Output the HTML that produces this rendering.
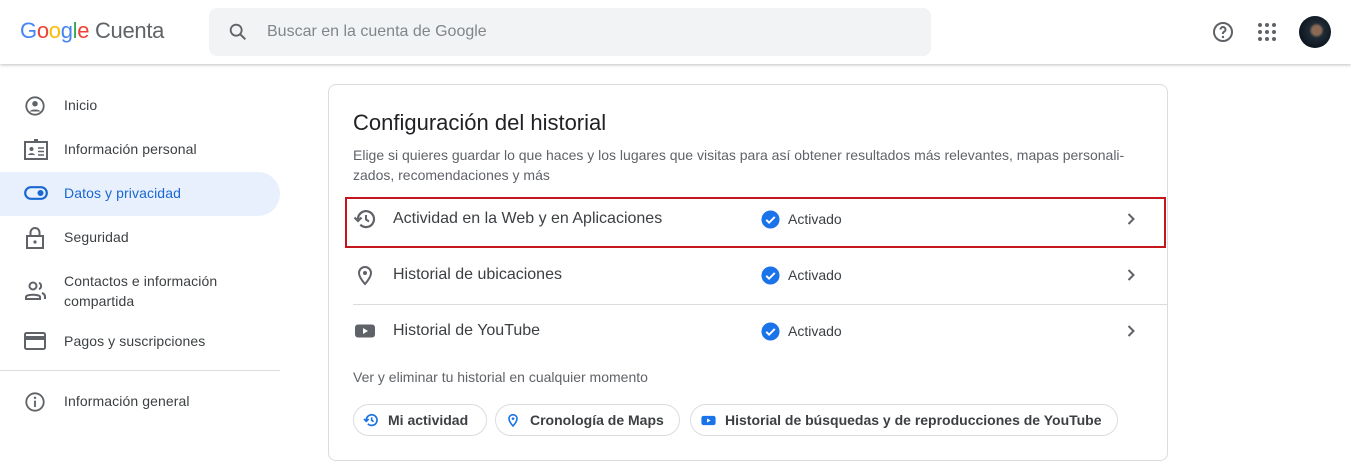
<!DOCTYPE html>
<html><head><meta charset="utf-8"><style>
*{margin:0;padding:0;box-sizing:border-box}
body{width:1351px;height:474px;overflow:hidden;background:#fff;font-family:"Liberation Sans",Arial,sans-serif;color:#202124;position:relative}
.hdr{position:absolute;left:0;top:0;width:1351px;height:64px;background:#fff;box-shadow:0 1px 3px rgba(0,0,0,.25);z-index:2}
.abs{position:absolute}
.nav{position:absolute;left:64px;font-size:14px;color:#3c4043;letter-spacing:.1px}
.ic{position:absolute;left:24px}
.card{position:absolute;left:328px;top:84px;width:840px;height:377px;border:1px solid #dadce0;border-radius:8px}
.row{position:absolute;left:393px;font-size:16px;color:#3c4043}
.act{position:absolute;left:788px;font-size:14px;color:#3c4043}
.chip{position:absolute;top:404px;height:32px;border:1px solid #dadce0;border-radius:16px;font-size:14px;color:#3c4043;font-weight:bold;line-height:30px}
</style></head><body>
<div class="hdr">
 <div class="abs" style="left:20px;top:18px;font-size:22px;letter-spacing:-.3px"><span style="color:#4285f4">G</span><span style="color:#ea4335">o</span><span style="color:#fbbc05">o</span><span style="color:#4285f4">g</span><span style="color:#34a853">l</span><span style="color:#ea4335">e</span> <span style="color:#5f6368">Cuenta</span></div>
 <div class="abs" style="left:209px;top:8px;width:722px;height:48px;background:#f1f3f4;border-radius:8px">
  <svg class="abs" style="left:18px;top:13px" width="22" height="22" viewBox="0 0 24 24"><circle cx="10" cy="10" r="6" fill="none" stroke="#5f6368" stroke-width="2"/><path d="M14.5 14.5L20 20" stroke="#5f6368" stroke-width="2.2"/></svg>
  <div class="abs" style="left:58px;top:15px;font-size:16px;color:#80868b">Buscar en la cuenta de Google</div>
 </div>
 <svg class="abs" style="left:1211px;top:20px" width="24" height="24" viewBox="0 0 24 24"><circle cx="12" cy="12" r="9" fill="none" stroke="#5f6368" stroke-width="2"/><path d="M9.5 9.5a2.5 2.5 0 1 1 3.5 2.3c-.7.4-1 .9-1 1.7v.5" fill="none" stroke="#5f6368" stroke-width="2"/><circle cx="12" cy="17" r="1.2" fill="#5f6368"/></svg>
 <svg class="abs" style="left:1258px;top:23px" width="18" height="18" viewBox="0 0 18 18" fill="#5f6368"><circle cx="2" cy="2" r="2"/><circle cx="9" cy="2" r="2"/><circle cx="16" cy="2" r="2"/><circle cx="2" cy="9" r="2"/><circle cx="9" cy="9" r="2"/><circle cx="16" cy="9" r="2"/><circle cx="2" cy="16" r="2"/><circle cx="9" cy="16" r="2"/><circle cx="16" cy="16" r="2"/></svg>
 <div class="abs" style="left:1299px;top:16px;width:32px;height:32px;border-radius:50%;background:radial-gradient(circle at 55% 45%,#8a6a55 0 18%,#1e2a35 30%,#0d1620 70%)"></div>
</div>

<div class="abs" style="left:0;top:172px;width:280px;height:44px;background:#e8f0fe;border-radius:0 22px 22px 0"></div>
<svg class="ic" style="top:95px" width="22" height="22" viewBox="0 0 24 24"><circle cx="12" cy="12" r="9.5" fill="none" stroke="#5f6368" stroke-width="2"/><circle cx="12" cy="9.5" r="3" fill="#5f6368"/><path d="M6 18c2-3 10-3 12 0" fill="#5f6368"/></svg>
<div class="nav" style="top:97px">Inicio</div>
<svg class="ic" style="top:139px" width="24" height="22" viewBox="0 0 24 22"><rect x="1" y="3" width="22" height="17" fill="none" stroke="#5f6368" stroke-width="2"/><rect x="10" y="0" width="4" height="4" fill="#5f6368"/><circle cx="7.5" cy="10" r="2" fill="#5f6368"/><path d="M4 16c1-2.5 6-2.5 7 0z" fill="#5f6368"/><path d="M14 9h6M14 12.5h6M14 16h6" stroke="#5f6368" stroke-width="1.6"/></svg>
<div class="nav" style="top:141px">Información personal</div>
<svg class="ic" style="top:185px" width="24" height="16" viewBox="0 0 24 16"><rect x="1.2" y="2.2" width="21.6" height="11.6" rx="5.8" fill="none" stroke="#1967d2" stroke-width="2.2"/><circle cx="16.5" cy="8" r="3" fill="#1967d2"/></svg>
<div class="nav" style="top:185px;color:#1967d2">Datos y privacidad</div>
<svg class="ic" style="top:226px" width="22" height="24" viewBox="0 0 22 24"><rect x="3" y="10" width="16" height="12" fill="none" stroke="#5f6368" stroke-width="2"/><path d="M6.5 10V6.5a4.5 4.5 0 0 1 9 0V10" fill="none" stroke="#5f6368" stroke-width="2"/><circle cx="11" cy="16" r="1.6" fill="#5f6368"/></svg>
<div class="nav" style="top:229px">Seguridad</div>
<svg class="ic" style="top:280px" width="24" height="22" viewBox="0 0 24 22"><circle cx="9" cy="6" r="3.5" fill="none" stroke="#5f6368" stroke-width="2"/><path d="M2 19v-2c0-3 14-3 14 0v2z" fill="none" stroke="#5f6368" stroke-width="2"/><path d="M15 2.8a3.5 3.5 0 0 1 0 6.4M18 13c2 .7 3 2 3 4v2" fill="none" stroke="#5f6368" stroke-width="2"/></svg>
<div class="nav" style="top:271px;line-height:20px">Contactos e información<br>compartida</div>
<svg class="ic" style="top:332px" width="22" height="18" viewBox="0 0 22 18"><rect x="1" y="1" width="20" height="16" rx="1.5" fill="none" stroke="#5f6368" stroke-width="2"/><rect x="1" y="4" width="20" height="4" fill="#5f6368"/></svg>
<div class="nav" style="top:333px">Pagos y suscripciones</div>
<div class="abs" style="left:0;top:370px;width:280px;height:1px;background:#dadce0"></div>
<svg class="ic" style="top:391px" width="22" height="22" viewBox="0 0 24 24"><circle cx="12" cy="12" r="9.5" fill="none" stroke="#5f6368" stroke-width="2"/><rect x="11" y="10.5" width="2" height="7" fill="#5f6368"/><circle cx="12" cy="7.5" r="1.3" fill="#5f6368"/></svg>
<div class="nav" style="top:393px">Información general</div>

<div class="card"></div>
<div class="abs" style="left:353px;top:110px;font-size:22px;color:#202124">Configuración del historial</div>
<div class="abs" style="left:353px;top:145px;width:800px;font-size:14px;line-height:20px;color:#5f6368">Elige si quieres guardar lo que haces y los lugares que visitas para así obtener resultados más relevantes, mapas personali-<br>zados, recomendaciones y más</div>

<div class="abs" style="left:345px;top:197px;width:821px;height:51px;border:2.5px solid #c5161d"></div>
<svg class="abs" style="left:353px;top:207px" width="24" height="24" viewBox="0 0 24 24"><path d="M5 12a8 8 0 1 1 2.3 5.7" fill="none" stroke="#5f6368" stroke-width="2.2"/><path d="M1.5 10.5L5 14l3.5-3.5" fill="none" stroke="#5f6368" stroke-width="2.2"/><path d="M13 8v4.5l3 2" fill="none" stroke="#5f6368" stroke-width="2"/></svg>
<div class="row" style="top:210px">Actividad en la Web y en Aplicaciones</div>
<svg class="abs" style="left:353px;top:263px" width="24" height="24" viewBox="0 0 24 24"><path d="M12 21s-6-6.5-6-11a6 6 0 0 1 12 0c0 4.5-6 11-6 11z" fill="none" stroke="#5f6368" stroke-width="2"/><circle cx="12" cy="10" r="2" fill="#5f6368"/></svg>
<div class="row" style="top:266px">Historial de ubicaciones</div>
<div class="abs" style="left:353px;top:304px;width:814px;height:1px;background:#dadce0"></div>
<svg class="abs" style="left:353px;top:319px" width="24" height="24" viewBox="0 0 24 24"><rect x="2" y="5.5" width="20" height="13" rx="3" fill="#5f6368"/><path d="M10 9l5 3-5 3z" fill="#fff"/></svg>
<div class="row" style="top:322px">Historial de YouTube</div>

<svg class="abs" style="left:761px;top:210px" width="19" height="19" viewBox="0 0 20 20"><circle cx="10" cy="10" r="9.5" fill="#1a73e8"/><path d="M5.5 10.3l3 3 6-6" fill="none" stroke="#fff" stroke-width="2"/></svg>
<svg class="abs" style="left:761px;top:266px" width="19" height="19" viewBox="0 0 20 20"><circle cx="10" cy="10" r="9.5" fill="#1a73e8"/><path d="M5.5 10.3l3 3 6-6" fill="none" stroke="#fff" stroke-width="2"/></svg>
<svg class="abs" style="left:761px;top:322px" width="19" height="19" viewBox="0 0 20 20"><circle cx="10" cy="10" r="9.5" fill="#1a73e8"/><path d="M5.5 10.3l3 3 6-6" fill="none" stroke="#fff" stroke-width="2"/></svg>
<div class="act" style="top:211px">Activado</div>
<div class="act" style="top:267px">Activado</div>
<div class="act" style="top:323px">Activado</div>
<svg class="abs" style="left:1124px;top:212px" width="14" height="14" viewBox="0 0 14 14"><path d="M4.5 2l5 5-5 5" fill="none" stroke="#5f6368" stroke-width="2"/></svg>
<svg class="abs" style="left:1124px;top:268px" width="14" height="14" viewBox="0 0 14 14"><path d="M4.5 2l5 5-5 5" fill="none" stroke="#5f6368" stroke-width="2"/></svg>
<svg class="abs" style="left:1124px;top:324px" width="14" height="14" viewBox="0 0 14 14"><path d="M4.5 2l5 5-5 5" fill="none" stroke="#5f6368" stroke-width="2"/></svg>

<div class="abs" style="left:353px;top:369px;font-size:14px;color:#5f6368">Ver y eliminar tu historial en cualquier momento</div>
<div class="chip" style="left:353px;width:134px">
 <svg class="abs" style="left:9px;top:7px" width="16" height="16" viewBox="0 0 24 24"><path d="M5 12a8 8 0 1 1 2.3 5.7" fill="none" stroke="#1a73e8" stroke-width="2.6"/><path d="M1.5 10.5L5 14l3.5-3.5" fill="none" stroke="#1a73e8" stroke-width="2.6"/><path d="M13 8v4.5l3 2" fill="none" stroke="#1a73e8" stroke-width="2.4"/></svg>
 <span class="abs" style="left:34px">Mi actividad</span></div>
<div class="chip" style="left:495px;width:185px">
 <svg class="abs" style="left:9px;top:7px" width="16" height="16" viewBox="0 0 24 24"><path d="M12 21s-6-6.5-6-11a6 6 0 0 1 12 0c0 4.5-6 11-6 11z" fill="none" stroke="#1a73e8" stroke-width="2.4"/><circle cx="12" cy="10" r="2" fill="#1a73e8"/></svg>
 <span class="abs" style="left:34px">Cronología de Maps</span></div>
<div class="chip" style="left:690px;width:428px">
 <svg class="abs" style="left:9px;top:7px" width="17" height="17" viewBox="0 0 24 24"><rect x="2" y="5.5" width="20" height="13" rx="3" fill="#1a73e8"/><path d="M10 9l5 3-5 3z" fill="#fff"/></svg>
 <span class="abs" style="left:34px">Historial de búsquedas y de reproducciones de YouTube</span></div>
</body></html>
